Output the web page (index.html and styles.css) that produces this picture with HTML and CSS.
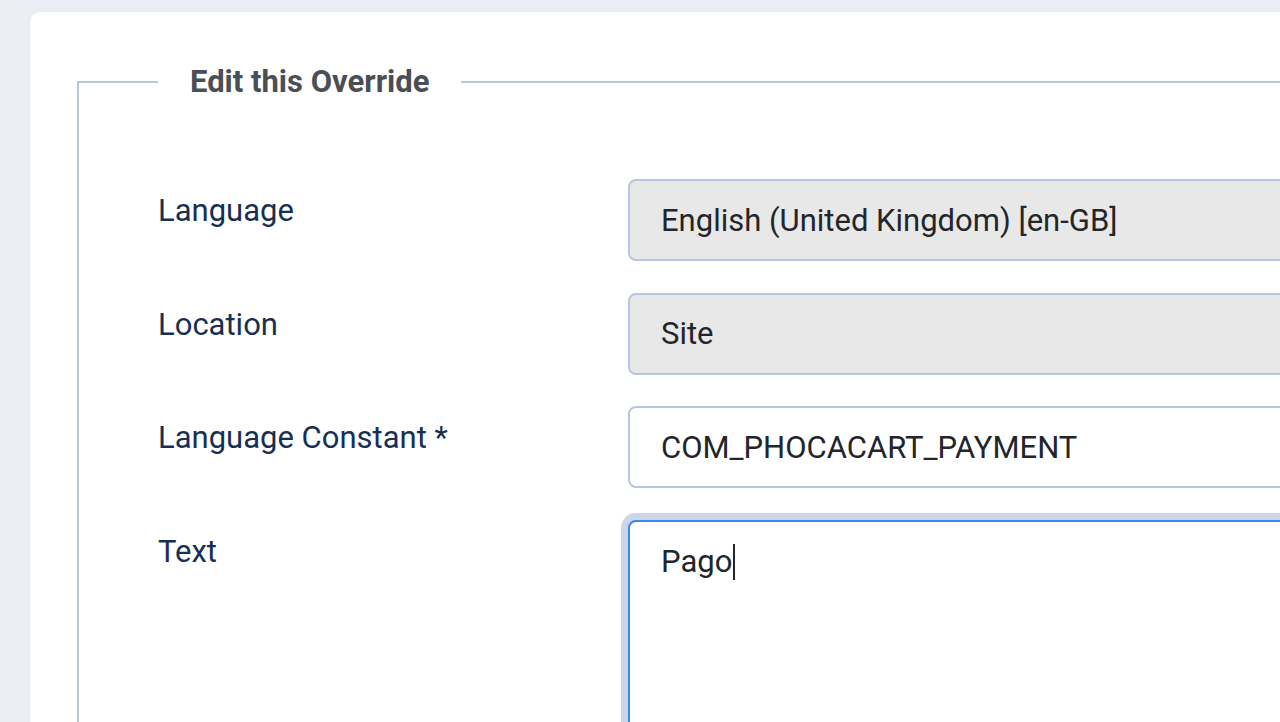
FILE: index.html
```html
<!DOCTYPE html>
<html lang="en">

<head>
    <meta charset="UTF-8">
    <meta name="viewport" content="width=device-width, initial-scale=1.0">
    <title>Edit this Override</title>
    <link rel="stylesheet" href="styles.css">
</head>

<body>
    <div class="card">
        <form class="override-form">
            <fieldset class="options-form">
                <legend>Edit this Override</legend>

                <div class="control-group">
                    <label for="language">Language</label>
                    <input type="text" id="language" class="form-control" value="English (United Kingdom) [en-GB]" readonly>
                </div>

                <div class="control-group">
                    <label for="client">Location</label>
                    <input type="text" id="client" class="form-control" value="Site" readonly>
                </div>

                <div class="control-group">
                    <label for="key">Language Constant *</label>
                    <input type="text" id="key" class="form-control" value="COM_PHOCACART_PAYMENT">
                </div>

                <div class="control-group">
                    <label for="override">Text</label>
                    <div class="textarea focused">Pago<span class="caret"></span></div>
                </div>
            </fieldset>
        </form>
    </div>
</body>

</html>
```

FILE: styles.css
```css
/* Global Styles */
:root {
    --page-bg: #ebeff5;
    --border-color: #b9c6dd;
    --label-color: #182f55;
    --legend-color: #4a4f56;
    --text-color: #22262a;
    --focus-color: #3d85f0;
    --focus-ring: #cbd6e8;
}

* {
    margin: 0;
    padding: 0;
    box-sizing: border-box;
    font-family: Roboto, 'Liberation Sans', sans-serif;
}

body {
    background-color: var(--page-bg);
    height: 722px;
    overflow: hidden;
    padding: 12px 0 0 30px;
}

.card {
    background: white;
    width: 1400px;
    height: 900px;
    border-radius: 10px;
    padding: 50px 0 0 47px;
    box-shadow: 0 0 6px rgba(0, 0, 0, 0.03);
}

.options-form {
    border: 2px solid var(--border-color);
    border-right: none;
    padding: 77px 0 0 79px;
}

.options-form legend {
    padding: 0 32px;
    font-size: 31px;
    line-height: 40px;
    font-weight: 700;
    color: var(--legend-color);
}

.control-group {
    display: grid;
    grid-template-columns: 470px 1fr;
    margin-bottom: 31.5px;
}

.control-group label {
    font-size: 31px;
    line-height: 44px;
    padding-top: 10px;
    color: var(--label-color);
}

.form-control {
    height: 82px;
    width: 100%;
    padding: 0 31px;
    border: 2px solid var(--border-color);
    border-radius: 8px;
    font-size: 31px;
    color: var(--text-color);
    background: white;
}

.form-control[readonly] {
    background-color: #e8e8e8;
}

.textarea {
    position: relative;
    height: 260px;
    padding: 20px 31px;
    border: 2px solid var(--focus-color);
    border-radius: 8px;
    font-size: 31px;
    line-height: 40px;
    color: var(--text-color);
    background: white;
}

.textarea.focused {
    box-shadow: 0 0 0 7px var(--focus-ring);
}

.caret {
    display: inline-block;
    width: 2px;
    height: 36px;
    margin-left: 1px;
    vertical-align: -8px;
    background: var(--text-color);
}
```
